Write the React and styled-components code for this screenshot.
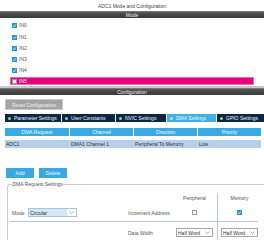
import React from "react";
import styled, { createGlobalStyle } from "styled-components";

const Global = createGlobalStyle`
  html, body { margin: 0; padding: 0; background: #fff; }
  body { width: 264px; height: 240px; overflow: hidden; font-family: "Liberation Sans", Arial, sans-serif; color: #333; }
  * { box-sizing: border-box; }
`;

const Page = styled.div`
  width: 264px;
  height: 240px;
  display: flex;
  flex-direction: column;
  overflow: hidden;
  & > * {
    flex: none;
  }
`;

const Title = styled.div`
  height: 11px;
  display: flex;
  align-items: center;
  justify-content: center;
  font-size: 5px;
  color: #444;
`;

const SectionBar = styled.div`
  height: 7px;
  background: linear-gradient(#5a5a5a, #444 50%, #3c3c3c);
  border-top: 1px solid #777;
  color: #e8e8e8;
  font-size: 5px;
  display: flex;
  align-items: center;
  justify-content: center;
`;

const ModeList = styled.div`
  display: flex;
  flex-direction: column;
  gap: 3px;
  padding: 3px 0 0;
  height: 68px;
`;

const ModeRow = styled.div`
  height: 8px;
  margin: 0 10px;
  padding-left: 1px;
  display: flex;
  align-items: center;
  gap: 2px;
  font-size: 5px;
  color: ${(p) => (p.$hl ? "#fff" : "#555")};
  background: ${(p) => (p.$hl ? "#e6007e" : "transparent")};
  border: 1px solid ${(p) => (p.$hl ? "#f06ab0" : "transparent")};
  &:first-child {
    margin-bottom: 1px;
  }
`;

const Box = styled.span`
  width: 5px;
  height: 5px;
  display: inline-flex;
  align-items: center;
  justify-content: center;
  background: ${(p) => (p.$on ? "#1f93d8" : "#fff")};
  border: ${(p) => (p.$on ? "none" : "1px solid #999")};
  flex: none;
`;

const Check = ({ on }) => (
  <Box $on={on}>
    {on && (
      <svg width="5" height="5" viewBox="0 0 5 5" style={{ display: "block" }}>
        <path d="M1 2.6 L2.1 3.7 L4 1.3" stroke="#fff" strokeWidth="0.8" fill="none" />
      </svg>
    )}
  </Box>
);

const Splitter = styled.div`
  height: 2px;
  background: #c5c9cd;
`;

const Content = styled.div`
  display: flex;
  flex-direction: column;
  padding-top: 4px;
  & > * {
    flex: none;
  }
`;

const ResetButton = styled.div`
  margin-left: 5px;
  width: 58px;
  height: 11px;
  background: #a4a4a4;
  border: 1px solid #c8c8c8;
  color: #f2f2f2;
  font-size: 5px;
  display: flex;
  align-items: center;
  justify-content: center;
`;

const Tabs = styled.div`
  margin: 4px 0 0 5px;
  height: 8px;
  display: flex;
  gap: 1px;
  overflow: hidden;
`;

const Tab = styled.div`
  width: ${(p) => p.$w}px;
  flex: none;
  height: 8px;
  background: ${(p) => (p.$active ? "#3db0e6" : "#0c2744")};
  color: #f0f4f8;
  font-size: 5px;
  display: flex;
  align-items: center;
  gap: 3px;
  padding-left: 3px;
  white-space: nowrap;
`;

const Dot = styled.span`
  width: 3px;
  height: 3px;
  border-radius: 50%;
  background: ${(p) => (p.$active ? "#b8f0a8" : "#8ed68a")};
  flex: none;
`;

const Grid = styled.div`
  margin-left: 5px;
  width: 256px;
  display: grid;
  grid-template-columns: 64px 63px 63px 63px;
  column-gap: 1px;
`;

const HeadGrid = styled(Grid)`
  margin-top: 6px;
`;

const HeadCell = styled.div`
  height: 8px;
  background: #3aa9e1;
  color: #f4f8fb;
  font-size: 5px;
  display: flex;
  align-items: center;
  justify-content: center;
`;

const DataRow = styled(Grid)`
  margin-top: 4px;
  background: #b5d1ea;
`;

const DataCell = styled.div`
  height: 8px;
  color: #333;
  font-size: 5px;
  display: flex;
  align-items: center;
  padding-left: 1px;
`;

const Buttons = styled.div`
  margin: 20px 0 0 6px;
  display: flex;
  gap: 5px;
`;

const BlueButton = styled.div`
  width: 28px;
  height: 10px;
  background: #3aa9e1;
  color: #f4f8fb;
  font-size: 5px;
  display: flex;
  align-items: center;
  justify-content: center;
`;

const Fieldset = styled.fieldset`
  margin: 3px -4px 0 7px;
  padding: 2px 0 0 4px;
  border: 1px solid #c9cdd2;
  border-right: none;
  border-bottom: none;
  border-top-left-radius: 3px;
  min-width: 0;
`;

const Legend = styled.legend`
  font-size: 5px;
  color: #555;
  padding: 0 0.5px;
  margin-left: 0;
  line-height: 6px;
`;

const SettingsGrid = styled.div`
  display: grid;
  grid-template-columns: 16px 49px 51px 48px 37px 8px 37px;
  grid-template-rows: 8px 6px 9px 4px 1px 6px 9px 10px;
  margin-top: 5px;
  font-size: 5px;
  color: #555;
`;

const Cell = styled.div`
  grid-column: ${(p) => p.$col};
  grid-row: ${(p) => p.$row};
  display: flex;
  align-items: center;
  justify-content: ${(p) => (p.$center ? "center" : "flex-start")};
  white-space: nowrap;
`;

const VLine = styled.div`
  grid-column: 6;
  grid-row: 1 / -1;
  justify-self: center;
  width: 1px;
  background: #b7c6da;
`;

const HLine = styled.div`
  grid-column: 1 / -1;
  grid-row: 5;
  margin-left: -2px;
  background: #b7c6da;
`;

const Select = styled.div`
  height: 9px;
  width: 100%;
  display: flex;
  align-items: center;
  border: 1px solid ${(p) => (p.$blue ? "#aac4dc" : "#a8a8a8")};
  background: ${(p) => (p.$blue ? "#d3e6f6" : "#fff")};
  color: #333;
  font-size: 5px;
`;

const SelectText = styled.span`
  flex: 1;
  padding-left: 1px;
  white-space: nowrap;
  overflow: hidden;
`;

const Arrow = styled.span`
  width: 9px;
  height: 100%;
  background: #fff;
  display: flex;
  align-items: center;
  justify-content: center;
  flex: none;
`;

const Chevron = () => (
  <svg width="5" height="3" viewBox="0 0 5 3" style={{ display: "block" }}>
    <path d="M0.5 0.5 L2.5 2.5 L4.5 0.5" stroke="#777" strokeWidth="0.6" fill="none" />
  </svg>
);

const Dropdown = ({ value, blue }) => (
  <Select $blue={blue}>
    <SelectText>{value}</SelectText>
    <Arrow>
      <Chevron />
    </Arrow>
  </Select>
);

const inputs = ["IN0", "IN1", "IN2", "IN3", "IN4", "IN5"];
const tabs = [
  { label: "Parameter Settings", w: 56 },
  { label: "User Constants", w: 53 },
  { label: "NVIC Settings", w: 50 },
  { label: "DMA Settings", w: 49, active: true },
  { label: "GPIO Settings", w: 50 },
];

export default function App() {
  return (
    <Page>
      <Global />
      <Title>ADC1 Mode and Configuration</Title>
      <SectionBar>Mode</SectionBar>
      <ModeList>
        {inputs.map((n, i) => (
          <ModeRow key={n} $hl={i === 5}>
            <Check on={i !== 5} />
            {n}
          </ModeRow>
        ))}
      </ModeList>
      <Splitter />
      <SectionBar>Configuration</SectionBar>
      <Content>
        <ResetButton>Reset Configuration</ResetButton>
        <Tabs>
          {tabs.map((t) => (
            <Tab key={t.label} $w={t.w} $active={t.active}>
              <Dot $active={t.active} />
              {t.label}
            </Tab>
          ))}
        </Tabs>
        <HeadGrid>
          {["DMA Request", "Channel", "Direction", "Priority"].map((h) => (
            <HeadCell key={h}>{h}</HeadCell>
          ))}
        </HeadGrid>
        <DataRow>
          {["ADC1", "DMA1 Channel 1", "Peripheral To Memory", "Low"].map((c) => (
            <DataCell key={c}>{c}</DataCell>
          ))}
        </DataRow>
        <Buttons>
          <BlueButton>Add</BlueButton>
          <BlueButton>Delete</BlueButton>
        </Buttons>
        <Fieldset>
          <Legend>DMA Request Settings</Legend>
          <SettingsGrid>
            <VLine />
            <Cell $col="5" $row="1" $center>Peripheral</Cell>
            <Cell $col="7" $row="1" $center>Memory</Cell>
            <Cell $col="1" $row="3">Mode</Cell>
            <Cell $col="2" $row="3">
              <Dropdown value="Circular" blue />
            </Cell>
            <Cell $col="4" $row="3">Increment Address</Cell>
            <Cell $col="5" $row="3" $center>
              <Check on={false} />
            </Cell>
            <Cell $col="7" $row="3" $center>
              <Check on />
            </Cell>
            <HLine />
            <Cell $col="4" $row="7">Data Width</Cell>
            <Cell $col="5" $row="7">
              <Dropdown value="Half Word" />
            </Cell>
            <Cell $col="7" $row="7">
              <Dropdown value="Half Word" />
            </Cell>
          </SettingsGrid>
        </Fieldset>
      </Content>
    </Page>
  );
}
